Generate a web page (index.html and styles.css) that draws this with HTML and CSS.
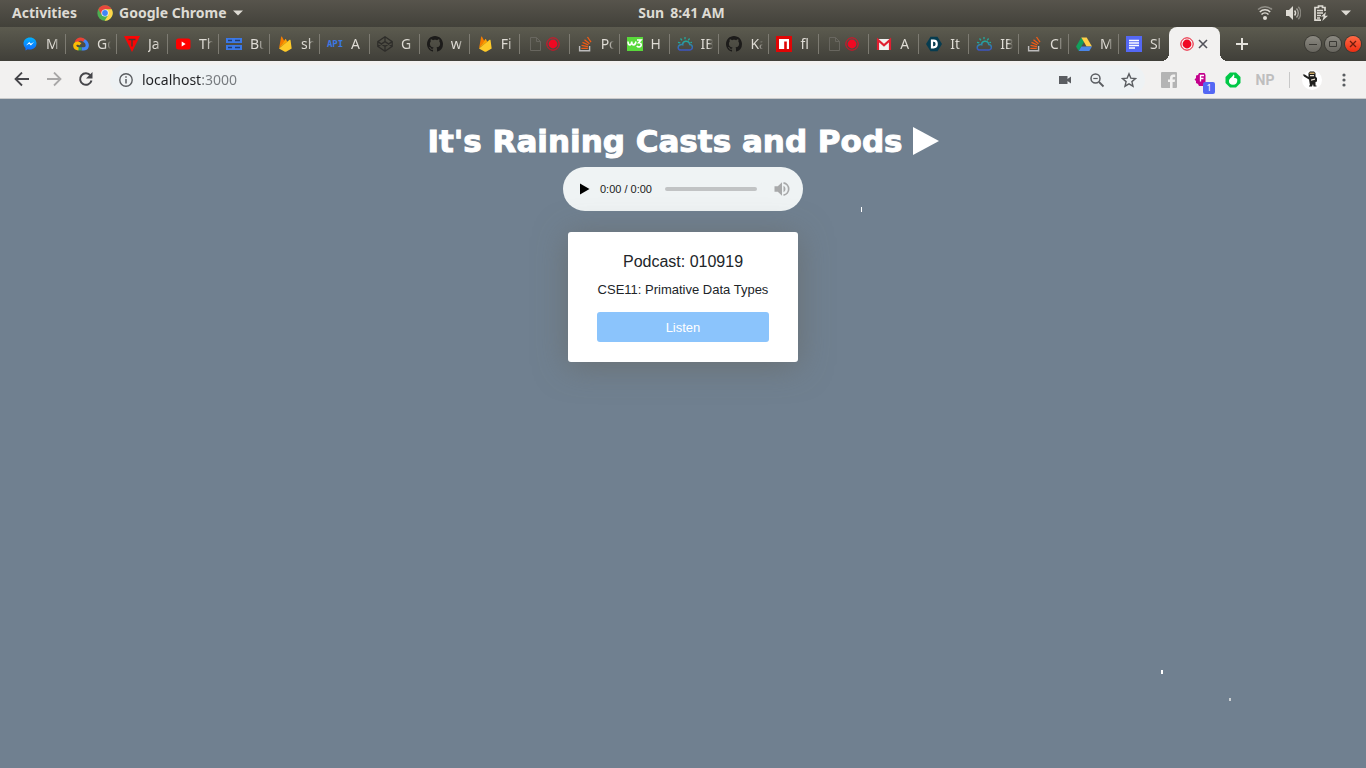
FILE: index.html
```html
<!DOCTYPE html>
<html lang="en">
<head>
<meta charset="utf-8">
<title>It's Raining Casts and Pods</title>
<link rel="stylesheet" href="styles.css">
</head>
<body>
<svg class="defs" aria-hidden="true">
  <defs>
    <linearGradient id="g-msg" x1="0" y1="0" x2="0" y2="1"><stop offset="0" stop-color="#00b2ff"/><stop offset="1" stop-color="#1169ff"/></linearGradient>
    <linearGradient id="g-ibm" x1="0" y1="0" x2="0" y2="1"><stop offset="0" stop-color="#24a89c"/><stop offset="1" stop-color="#3c55c0"/></linearGradient>
  </defs>
  <symbol id="i-fire" viewBox="0 0 16 16"><path fill="#f57c00" d="M2 12.500 4.200.8c.1-.5.6-.5.8-.1l2.300 4.200z"/><path fill="#ffa000" d="M2 12.500 8.200 3.300c.2-.4.6-.4.8 0l1.200 2.500z"/><path fill="#ffca28" d="M2 12.500 12.600 3.800c.3-.3.8-.1.9.3l1.200 8.400-5.600 3.200c-.4.200-.9.200-1.300 0z"/></symbol>
  <symbol id="i-github" viewBox="0 0 16 16"><path fill="#1c1b1a" d="M8 0C3.580 0 0 3.580 0 8c0 3.540 2.290 6.530 5.470 7.590.4.070.55-.17.55-.38 0-.19-.01-.82-.01-1.490-2.010.37-2.530-.49-2.690-.94-.09-.23-.48-.94-.82-1.130-.28-.15-.68-.52-.01-.53.63-.01 1.080.58 1.230.82.72 1.210 1.870.87 2.330.66.070-.52.28-.87.51-1.070-1.780-.2-3.640-.89-3.640-3.950 0-.87.31-1.590.82-2.150-.08-.2-.36-1.020.08-2.120 0 0 .67-.21 2.200.82.64-.18 1.320-.27 2-.27s1.360.09 2 .27c1.530-1.040 2.200-.82 2.200-.82.44 1.100.16 1.920.08 2.120.51.56.82 1.270.82 2.150 0 3.070-1.870 3.750-3.650 3.950.29.25.54.73.54 1.480 0 1.070-.01 1.930-.01 2.200 0 .21.15.46.55.38A8 8 0 0 0 16 8c0-4.420-3.580-8-8-8z"/></symbol>
  <symbol id="i-page" viewBox="0 0 16 16"><path fill="none" stroke="#68665f" d="M3.500 1.500h6l4 4v9h-10zM9.500 1.500v4h4"/></symbol>
  <symbol id="i-rec" viewBox="0 0 14 14"><circle cx="7" cy="7" r="6.200" fill="none" stroke="#ea0a24" stroke-width="1"/><circle cx="7" cy="7" r="4.400" fill="#f00822"/></symbol>
  <symbol id="i-so" viewBox="0 0 16 16"><path fill="none" stroke="#bcbbbb" stroke-width="1.400" d="M2.600 10v4.700h10V10"/><path fill="none" stroke="#f15b16" stroke-width="1.300" d="M4.300 12.300h6.500M4.500 9.400l6.400 1.300M5.500 6.300l5.900 2.700M7.500 3.700l5 4.100M10.500 1l3.500 5.200"/></symbol>
  <symbol id="i-ibm" viewBox="0 0 16 16"><path fill="none" stroke="url(#g-ibm)" stroke-width="1.500" d="M4 14h8.500a2.700 2.700 0 0 0 .3-5.400C12.500 6 10.500 5 8.600 5.300 6.600 5.600 5.600 7 5.700 8.700 4 8.200 1.200 9 1.200 11.400 1.200 13 2.500 14 4 14z"/><path stroke="#24a89c" stroke-width="1.300" d="M8 1v2.300M3.500 2.500 5 4.300M12.600 2.500l-1.400 1.800M1 6.300l2.300.6M15 6.300l-1.600.4"/></symbol>
</svg>

<header class="topbar">
  <div class="topbar-left">
    <button class="sys" type="button">Activities</button>
    <button class="sys" type="button">
      <svg class="icon16" viewBox="0 0 16 16"><circle cx="8" cy="8" r="7.700" fill="#4caf50"/><path fill="#e8473c" d="M1.300 4.200A7.700 7.700 0 0 1 14.700 4.200H8L4.700 9.800z"/><path fill="#ffd54a" d="M14.700 4.200A7.700 7.700 0 0 1 7.600 15.700L11.300 9.900 8 4.200z"/><circle cx="8" cy="8" r="3.600" fill="#fff"/><circle cx="8" cy="8" r="2.900" fill="#4285f4"/></svg>
      <span>Google Chrome</span>
      <svg class="caret" viewBox="0 0 10 6"><path fill="currentColor" d="M0 .5h10L5 5.500z"/></svg>
    </button>
  </div>
  <button class="sys" type="button"><span>Sun</span><span>8:41 AM</span></button>
  <div class="topbar-right">
    <button class="sys tray" type="button" aria-label="System menu">
      <svg class="icon16" viewBox="0 0 16 16"><circle cx="8" cy="13" r="2" fill="#dedbd4"/><g fill="none" stroke="#dedbd4" stroke-width="1.500"><path d="M4.500 9.500a5 5 0 0 1 7 0"/><path d="M2.800 7a7.400 7.400 0 0 1 10.400 0"/><path opacity=".45" d="M1 4.500a10 10 0 0 1 14 0"/></g></svg>
      <svg class="icon16" viewBox="0 0 16 16"><path fill="#dedbd4" d="M1 5h3l4-4v14l-4-4H1z"/><g fill="none" stroke="#dedbd4" stroke-width="1.400"><path d="M9.600 5.500a4 4 0 0 1 0 5"/><path opacity=".6" d="M11.500 3.500a6.500 6.500 0 0 1 0 9"/><path opacity=".4" d="M13.300 1.800a9 9 0 0 1 0 12.400"/></g></svg>
      <svg class="icon16" viewBox="0 0 16 16"><path fill="none" stroke="#dedbd4" stroke-width="1.700" d="M12 6V2.500H9.500V1h-4v1.500H2v12.700h6"/><path stroke="#dedbd4" stroke-width="1.300" d="M4 5.500h6M4 8h6M4 10.500h4M4 13h3"/><path fill="#dedbd4" d="M13 7l-5 4.500h2.600L9.300 16l5.700-5.300h-3z"/></svg>
      <svg class="caret" viewBox="0 0 10 6"><path fill="currentColor" d="M0 .5h10L5 5.500z"/></svg>
    </button>
  </div>
</header>

<div class="tabstrip">
  <nav class="tabs" aria-label="Tabs">
    <button class="tab" type="button"><svg class="icon16" viewBox="0 0 16 16"><path fill="url(#g-msg)" d="M8 1.500c-3.700 0-6.500 2.600-6.500 6 0 1.800.8 3.300 2 4.400V14.500l2.300-1.200c.7.200 1.400.3 2.200.3 3.700 0 6.500-2.700 6.500-6.100s-2.800-6-6.500-6z"/><path fill="#fff" d="M4 9.500l3.200-3.400 1.700 1.600L12 6 8.900 9.400 7.200 7.800z"/></svg><span>M</span></button>
    <button class="tab" type="button"><svg class="icon16" viewBox="0 0 16 16"><g fill="none" stroke-width="3.200"><path stroke="#ea4335" d="M3.200 6.500C4.500 2.500 9.500 2 11.500 5"/><path stroke="#4285f4" d="M11 4.500c2 1.200 3.300 2.500 3.300 4.800 0 2.200-1.500 3.500-3.300 3.500H8.500"/><path stroke="#34a853" d="M8.500 12.800h-4"/><path stroke="#fbbc05" d="M5.500 12.800C1 12.600.5 7.500 4.500 7c1.300 0 2 .5 2.800 1.300"/></g></svg><span>Go</span></button>
    <button class="tab" type="button"><svg class="icon16" viewBox="0 0 16 16"><path fill="#fb0505" d="M0 0h16L8 16z"/><path stroke="#473a35" stroke-width="1.300" fill="none" d="M4.500 3.500h7M8 3.500v7"/></svg><span>Ja</span></button>
    <button class="tab" type="button"><svg class="icon16" viewBox="0 0 16 16"><rect x="1" y="2.500" width="14.500" height="11" rx="2.500" fill="#f00"/><path fill="#fff" d="M6.700 5.600 10.600 8l-3.900 2.400z"/></svg><span>Th</span></button>
    <button class="tab" type="button"><svg class="icon16" viewBox="0 0 16 16"><path fill="#3b78e7" d="M0 2h16v5H0zM0 9h16v5H0z"/><path stroke="#203c70" stroke-width="1.300" d="M2 4.500h4M9 4.500h5M2 11.500h4M9 11.500h5"/></svg><span>Bu</span></button>
    <button class="tab" type="button"><svg class="icon16"><use href="#i-fire"/></svg><span>sh</span></button>
    <button class="tab" type="button"><i class="fav-api">API</i><span>A</span></button>
    <button class="tab" type="button"><svg class="icon16" viewBox="0 0 16 16"><path fill="none" stroke="#2e2d2a" stroke-width="1.300" d="M8 .8l7.200 4.800v4.800L8 15.200.8 10.400V5.600zM.8 5.600 8 10.400l7.200-4.800M.8 10.400 8 5.600l7.200 4.800M8 .8v4.800M8 10.400v4.800"/></svg><span>G</span></button>
    <button class="tab" type="button"><svg class="icon16"><use href="#i-github"/></svg><span>w</span></button>
    <button class="tab" type="button"><svg class="icon16"><use href="#i-fire"/></svg><span>Fi</span></button>
    <button class="tab recording" type="button" aria-label="Recording"><svg class="icon16"><use href="#i-page"/></svg><svg class="rec"><use href="#i-rec"/></svg></button>
    <button class="tab" type="button"><svg class="icon16"><use href="#i-so"/></svg><span>Po</span></button>
    <button class="tab" type="button"><svg class="icon16" viewBox="0 0 16 16"><rect y="1" width="16" height="14" fill="#59d93b"/><path fill="none" stroke="#fff" stroke-width="1.600" d="M1 5.500c0 4.500 3.500 4.500 3.700 0 .2 4.500 3.500 4.500 4.300 0M10 4h4l-2.300 2.700c3.300-.2 3.300 4.300.3 4.300-1 0-1.700-.4-2.200-1.200"/></svg><span>H</span></button>
    <button class="tab" type="button"><svg class="icon16"><use href="#i-ibm"/></svg><span>IB</span></button>
    <button class="tab" type="button"><svg class="icon16"><use href="#i-github"/></svg><span>Ka</span></button>
    <button class="tab" type="button"><svg class="icon16" viewBox="0 0 16 16"><path fill="#e00505" d="M0 0h16v16H0z"/><path fill="#fff" d="M3 3h10v10h-2.200V5.500H8.200V13H3z"/></svg><span>fl</span></button>
    <button class="tab recording" type="button" aria-label="Recording"><svg class="icon16"><use href="#i-page"/></svg><svg class="rec"><use href="#i-rec"/></svg></button>
    <button class="tab" type="button"><svg class="icon16" viewBox="0 0 16 16"><path fill="#f1f1f1" d="M1 3h14v11H1z"/><path fill="none" stroke="#e01e30" stroke-width="2.200" d="M2 14V4l6 5.300L14 4v10"/></svg><span>A</span></button>
    <button class="tab" type="button"><svg class="icon16" viewBox="0 0 16 16"><path fill="#063c50" d="M4.500.8h7L16 8l-4.500 7.200h-7L0 8z"/><path fill="none" stroke="#fff" stroke-width="2.200" d="M6 4.700v6.600h1.500c4.300 0 4.300-6.600 0-6.600z"/></svg><span>It</span></button>
    <button class="tab" type="button"><svg class="icon16"><use href="#i-ibm"/></svg><span>IB</span></button>
    <button class="tab" type="button"><svg class="icon16"><use href="#i-so"/></svg><span>Cl</span></button>
    <button class="tab" type="button"><svg class="icon16" viewBox="0 0 16 16"><path fill="#12a05c" d="M5.300 1.500 0 10.400 2.700 15 8 6z"/><path fill="#ffcf48" d="M5.300 1.500h5.400l5.300 8.900h-5.400z"/><path fill="#4a86e8" d="M5.400 10.400H16L13.300 15H2.700z"/></svg><span>M</span></button>
    <button class="tab" type="button"><svg class="icon16" viewBox="0 0 16 16"><path fill="#5468f4" d="M0 0h16v16H0z"/><path stroke="#fff" stroke-width="1.300" d="M3 4.500h10M3 7h10M3 9.500h10M3 12h6"/></svg><span>Sl</span></button>
    <button class="tab active" type="button" aria-label="It's Raining Casts and Pods"><svg class="rec"><use href="#i-rec"/></svg><svg class="close" viewBox="0 0 10 10"><path stroke="#52525a" stroke-width="1.600" d="M1 1l8 8M9 1L1 9"/></svg></button>
  </nav>
  <button class="newtab" type="button" aria-label="New tab"><svg viewBox="0 0 12 12"><path stroke="#e4e2dc" stroke-width="2" d="M6 0v12M0 6h12"/></svg></button>
  <div class="window-controls">
    <button class="win" type="button" aria-label="Minimize"><svg viewBox="0 0 16 16"><path stroke="#3a3934" d="M4 8.500h8"/></svg></button>
    <button class="win" type="button" aria-label="Maximize"><svg viewBox="0 0 16 16"><path fill="none" stroke="#3a3934" d="M4.500 5.500h7v5h-7z"/></svg></button>
    <button class="win win-close" type="button" aria-label="Close"><svg viewBox="0 0 16 16"><path stroke="#6b1c0e" stroke-width="1.300" d="M5 5l6 6M11 5l-6 6"/></svg></button>
  </div>
</div>

<div class="toolbar">
  <button class="tool" type="button" aria-label="Back"><svg class="icon16" viewBox="0 0 16 16"><path fill="none" stroke="#46464a" stroke-width="1.800" d="M15 7H2M8 .5 1.500 7 8 13.500"/></svg></button>
  <button class="tool" type="button" aria-label="Forward"><svg class="icon16" viewBox="0 0 16 16"><path fill="none" stroke="#a8a7a7" stroke-width="1.800" d="M1 7h13M8 .5 14.500 7 8 13.500"/></svg></button>
  <button class="tool" type="button" aria-label="Reload"><svg class="icon16" viewBox="0 0 16 16"><path fill="none" stroke="#46464a" stroke-width="2" d="M12.500 3.500A5.800 5.800 0 1 0 13.500 8.500"/><path fill="#46464a" d="M14.500 0v6.500H8z"/></svg></button>
  <div class="omnibox">
    <svg class="info" viewBox="0 0 14 14"><circle cx="7" cy="7" r="6.200" fill="none" stroke="#5a5d61" stroke-width="1.400"/><path stroke="#5a5d61" stroke-width="1.500" d="M7 6v4.500M7 3.300v1.500"/></svg>
    <input class="url" type="text" aria-label="Address" value="localhost:3000">
    <button class="tool" type="button" aria-label="Camera"><svg class="icon16" viewBox="0 0 16 16"><path fill="#5a5d61" d="M2 4h8.500v3L14 4.500v7L10.500 9v3H2z"/></svg></button>
    <button class="tool" type="button" aria-label="Zoom"><svg class="icon16" viewBox="0 0 16 16"><circle cx="6.500" cy="6.500" r="4.500" fill="none" stroke="#5a5d61" stroke-width="1.500"/><path stroke="#5a5d61" stroke-width="1.800" d="M10 10l4.500 4.500"/><path stroke="#5a5d61" stroke-width="1.200" d="M4.300 6.500h4.400"/></svg></button>
    <button class="tool" type="button" aria-label="Bookmark"><svg class="icon16" viewBox="0 0 16 16"><path fill="none" stroke="#5a5d61" stroke-width="1.400" d="M8 1.800l1.800 4.300 4.700.4-3.600 3.100 1.100 4.600L8 11.800l-4 2.400 1.100-4.600-3.600-3.100 4.700-.4z"/></svg></button>
  </div>
  <div class="extensions">
    <button class="tool" type="button" aria-label="Facebook"><svg class="icon16" viewBox="0 0 16 16"><rect width="16" height="16" rx="1" fill="#b4b4b4"/><path fill="#f2f1f0" d="M9 16v-6H7V7.500h2V6c0-2.300 1.300-3.500 3.400-3.500h1.800V5h-1.300c-1 0-1.300.4-1.300 1.300v1.200h2.500l-.4 2.500h-2.100v6z"/></svg></button>
    <button class="tool badged" type="button" aria-label="Extension, 1 alert"><svg class="icon16" viewBox="0 0 16 16"><path fill="#c4008c" d="M6 1h5.500l1 2v11H6l-1-2-2-1V9L1.500 7.500 3 6V3.500L5 3z"/><path fill="none" stroke="#fff" stroke-width="1.300" d="M11 3.500H7.500v6M7.500 6.500h3"/></svg><span class="badge">1</span></button>
    <button class="tool" type="button" aria-label="Likes"><svg class="icon16" viewBox="0 0 16 16"><path fill="#00c846" d="M5 .5h6L15.500 5v6L11 15.500H5L.5 11V5z"/><path fill="#fff" d="M8.500 2.500c1 .2 1 1.300.6 3.500 2 0 3.200.5 3.200 2 0 3-1.300 4.800-4.300 4.800S3.700 11 4 8.500C4.500 6 7.500 5.500 8.500 2.500z"/></svg></button>
    <button class="tool np" type="button">NP</button>
    <span class="divider"></span>
    <button class="tool avatar" type="button" aria-label="Profile"><svg viewBox="0 0 20 20"><circle cx="10" cy="10" r="10" fill="#fff"/><path fill="#20201e" d="M6.500 3 8 1.500h4L13.500 3v3.500L15 8v3.500l-1.500.5v3.500h1v1h-3l-.5-2.500-1 2.500h-3v-1h1L7 9.500 2 6.500.8 4.500h2L6.500 7z"/><path fill="#c9a662" d="M7.500 2.500h5V4h-5z"/><path fill="#eee5d7" d="M8 5h4v1.300H8zM9 9.500l4-1v1.200l-4 1z"/></svg></button>
    <button class="tool" type="button" aria-label="Menu"><svg class="icon16" viewBox="0 0 16 16"><g fill="#5a5d61"><circle cx="8" cy="3" r="1.600"/><circle cx="8" cy="8" r="1.600"/><circle cx="8" cy="13" r="1.600"/></g></svg></button>
  </div>
</div>

<main class="page">
  <h1 class="title">It's Raining Casts and Pods <svg class="title-play" viewBox="0 0 26 28" aria-hidden="true"><path fill="currentColor" d="M0 0v28l26-14z"/></svg></h1>
  <div class="player">
    <button class="player-btn" type="button" aria-label="Play"><svg viewBox="0 0 10 12"><path d="M0 .5v11L9.500 6z"/></svg></button>
    <span class="time">0:00 / 0:00</span>
    <input class="seek" type="range" min="0" max="100" value="0" aria-label="Seek">
    <button class="player-btn volume" type="button" aria-label="Mute"><svg viewBox="0 0 16 16"><path fill="#a8a9aa" d="M.5 5.300h3.300L8 1.300v13.400l-4.200-4H.5z"/><path fill="#a8a9aa" d="M9.500 4.700a3.700 3.700 0 0 1 0 6.600z"/><path fill="none" stroke="#a8a9aa" stroke-width="1.700" d="M9.500 1.800a6.300 6.300 0 0 1 0 12.400"/></svg></button>
  </div>
  <article class="card">
    <h2 class="card-title">Podcast: 010919</h2>
    <p class="card-text">CSE11: Primative Data Types</p>
    <button class="listen" type="button">Listen</button>
  </article>
  <i class="drop drop-a"></i>
  <i class="drop drop-b"></i>
  <i class="drop drop-c"></i>
</main>
</body>
</html>
```
FILE: styles.css
```css
* {
  box-sizing: border-box;
}

body {
  margin: 0;
  min-height: 100vh;
  display: flex;
  flex-direction: column;
  font-family: "Noto Sans", "Open Sans", sans-serif;
  background: #708090;
}

button {
  margin: 0;
  padding: 0;
  border: 0;
  background: none;
  font: inherit;
  color: inherit;
}

svg {
  display: block;
  flex: none;
}

.defs {
  position: absolute;
  width: 0;
  height: 0;
}

.icon16 {
  width: 16px;
  height: 16px;
}

/* System bar */
.topbar {
  display: grid;
  grid-template-columns: 1fr auto 1fr;
  align-items: center;
  height: 27px;
  padding: 0 15px 1px 12px;
  background: linear-gradient(#57544c, #42413a);
  color: #dedbd4;
  font-size: 14px;
  font-weight: 700;
}

.topbar-left {
  display: flex;
  gap: 20px;
}

.topbar-right {
  display: flex;
  justify-content: flex-end;
}

.sys {
  display: flex;
  align-items: center;
  gap: 6px;
  line-height: 20px;
}

.tray {
  gap: 12px;
}

.caret {
  width: 10px;
  height: 6px;
}

/* Tab strip */
.tabstrip {
  display: flex;
  align-items: center;
  height: 34px;
  padding: 0 5px 0 15px;
  background: linear-gradient(#5c5b4f, #403f39);
  color: #dedbd4;
}

.tabs {
  flex: 1;
  min-width: 0;
  height: 34px;
  display: flex;
  align-items: center;
}

.tab {
  flex: 1 1 0;
  min-width: 0;
  height: 20px;
  display: flex;
  align-items: center;
  gap: 8px;
  padding: 0 5px 0 7px;
  border-right: 1px solid #7d7b72;
  font-size: 14px;
  line-height: 20px;
}

.tab:nth-child(-n+5) {
  flex: 0 0 51px;
}

.tab span {
  flex: 1;
  min-width: 0;
  overflow: hidden;
  white-space: nowrap;
  text-align: left;
  mask-image: linear-gradient(to right, #000 60%, transparent);
}

.tab:nth-last-child(2) {
  border-right-color: transparent;
}

.tab .rec {
  width: 14px;
  height: 14px;
}

.recording {
  gap: 3px;
}

.fav-api {
  width: 16px;
  font: bold 9px/16px "DejaVu Sans Mono", monospace;
  color: #3b78e7;
}

.tab.active {
  position: relative;
  flex: 0 0 51px;
  height: 34px;
  justify-content: center;
  gap: 4px;
  padding: 0;
  border: 0;
  border-radius: 8px 8px 0 0;
  background: #f2f1f0;
}

.tab.active::before,
.tab.active::after {
  content: "";
  position: absolute;
  bottom: 0;
  width: 8px;
  height: 8px;
}

.tab.active::before {
  right: 100%;
  background: radial-gradient(circle at 0 0, transparent 8px, #f2f1f0 8px);
}

.tab.active::after {
  left: 100%;
  background: radial-gradient(circle at 100% 0, transparent 8px, #f2f1f0 8px);
}

.close {
  width: 10px;
  height: 10px;
}

.newtab {
  width: 44px;
  display: flex;
  justify-content: center;
}

.newtab svg {
  width: 12px;
  height: 12px;
}

.window-controls {
  display: flex;
  gap: 4px;
  margin-left: 41px;
}

.win {
  width: 16px;
  height: 16px;
  border-radius: 50%;
  background: linear-gradient(#8b8981, #68665f);
  box-shadow: 0 0 0 1px #3a3934;
}

.win-close {
  background: linear-gradient(#ff6a45, #ee2d12);
}

/* Toolbar */
.toolbar {
  display: flex;
  align-items: center;
  height: 38px;
  padding: 0 14px;
  gap: 16px;
  background: #f2f1f0;
  border-bottom: 1px solid #c9cacb;
}

.tool {
  display: flex;
  align-items: center;
  justify-content: center;
}

.omnibox {
  flex: 1;
  display: flex;
  align-items: center;
  gap: 16px;
  height: 30px;
  padding: 0 8px 0 9px;
  border-radius: 15px;
  background: #eef2f4;
}

.info {
  width: 14px;
  height: 14px;
}

.url {
  flex: 1;
  min-width: 0;
  margin-left: -7px;
  padding: 0;
  border: 0;
  outline: 0;
  font: 14px/20px "Noto Sans", "Open Sans", sans-serif;
  color: transparent;
  background: linear-gradient(to right, #202124 60px, #75797d 60px) text;
}

.extensions {
  display: flex;
  align-items: center;
  gap: 16px;
}

.badged {
  position: relative;
}

.badge {
  position: absolute;
  left: 10px;
  top: 10px;
  width: 12px;
  height: 12px;
  border-radius: 2px;
  background: #5468f4;
  color: #fff;
  font-size: 9px;
  line-height: 12px;
}

.np {
  width: 16px;
  color: #bebebe;
  font: bold 14px/16px Roboto, sans-serif;
}

.divider {
  width: 1px;
  height: 16px;
  background: #c8c8c8;
}

.avatar {
  margin: 0 -2px 0 -4px;
}

.avatar svg {
  width: 20px;
  height: 20px;
}

/* Page */
.page {
  position: relative;
  flex: 1;
  display: flex;
  flex-direction: column;
  align-items: center;
  padding-top: 22px;
  font-family: "Liberation Sans", Arial, sans-serif;
}

.title {
  display: flex;
  align-items: center;
  gap: 10px;
  margin: 0;
  color: #fff;
  font: bold 31px/40px "DejaVu Sans", Verdana, sans-serif;
  -webkit-text-stroke: 1px #fff;
}

.title-play {
  width: 26px;
  height: 28px;
}

.player {
  display: flex;
  align-items: center;
  width: 240px;
  height: 44px;
  margin-top: 6px;
  padding: 0 13px 0 17px;
  border-radius: 22px;
  background: #eff3f4;
}

.player-btn svg {
  width: 10px;
  height: 12px;
}

.player-btn.volume svg {
  width: 16px;
  height: 16px;
}

.time {
  margin: 0 13px 0 10px;
  font-size: 11px;
  white-space: nowrap;
  color: #1b1b1b;
}

.seek {
  flex: 1;
  min-width: 0;
  height: 4px;
  margin: 0 17px 0 0;
  border-radius: 2px;
  background: #c1c3c4;
  appearance: none;
}

.seek::-webkit-slider-thumb {
  appearance: none;
  width: 0;
  height: 0;
}

.card {
  width: 230px;
  margin-top: 21px;
  padding: 20px 29px;
  border-radius: 3px;
  background: #fff;
  box-shadow: 0 4px 32px rgba(100, 100, 95, 0.6);
  text-align: center;
  color: #212529;
}

.card-title {
  margin: 0 0 8px;
  font-size: 16px;
  font-weight: 400;
  line-height: 20px;
}

.card-text {
  margin: 0 -8px 12px;
  font-size: 13px;
  line-height: 20px;
}

.listen {
  display: block;
  width: 100%;
  height: 30px;
  border-radius: 3px;
  background: #8bc4fc;
  color: #fff;
  font-size: 13px;
}

.drop {
  position: absolute;
  width: 2px;
  height: 4px;
  background: #fff;
}

.drop-a {
  left: 861px;
  top: 108px;
  width: 1px;
  height: 5px;
}

.drop-b {
  left: 1161px;
  top: 571px;
}

.drop-c {
  left: 1229px;
  top: 599px;
  height: 3px;
  background: #ccd0d3;
}
```
